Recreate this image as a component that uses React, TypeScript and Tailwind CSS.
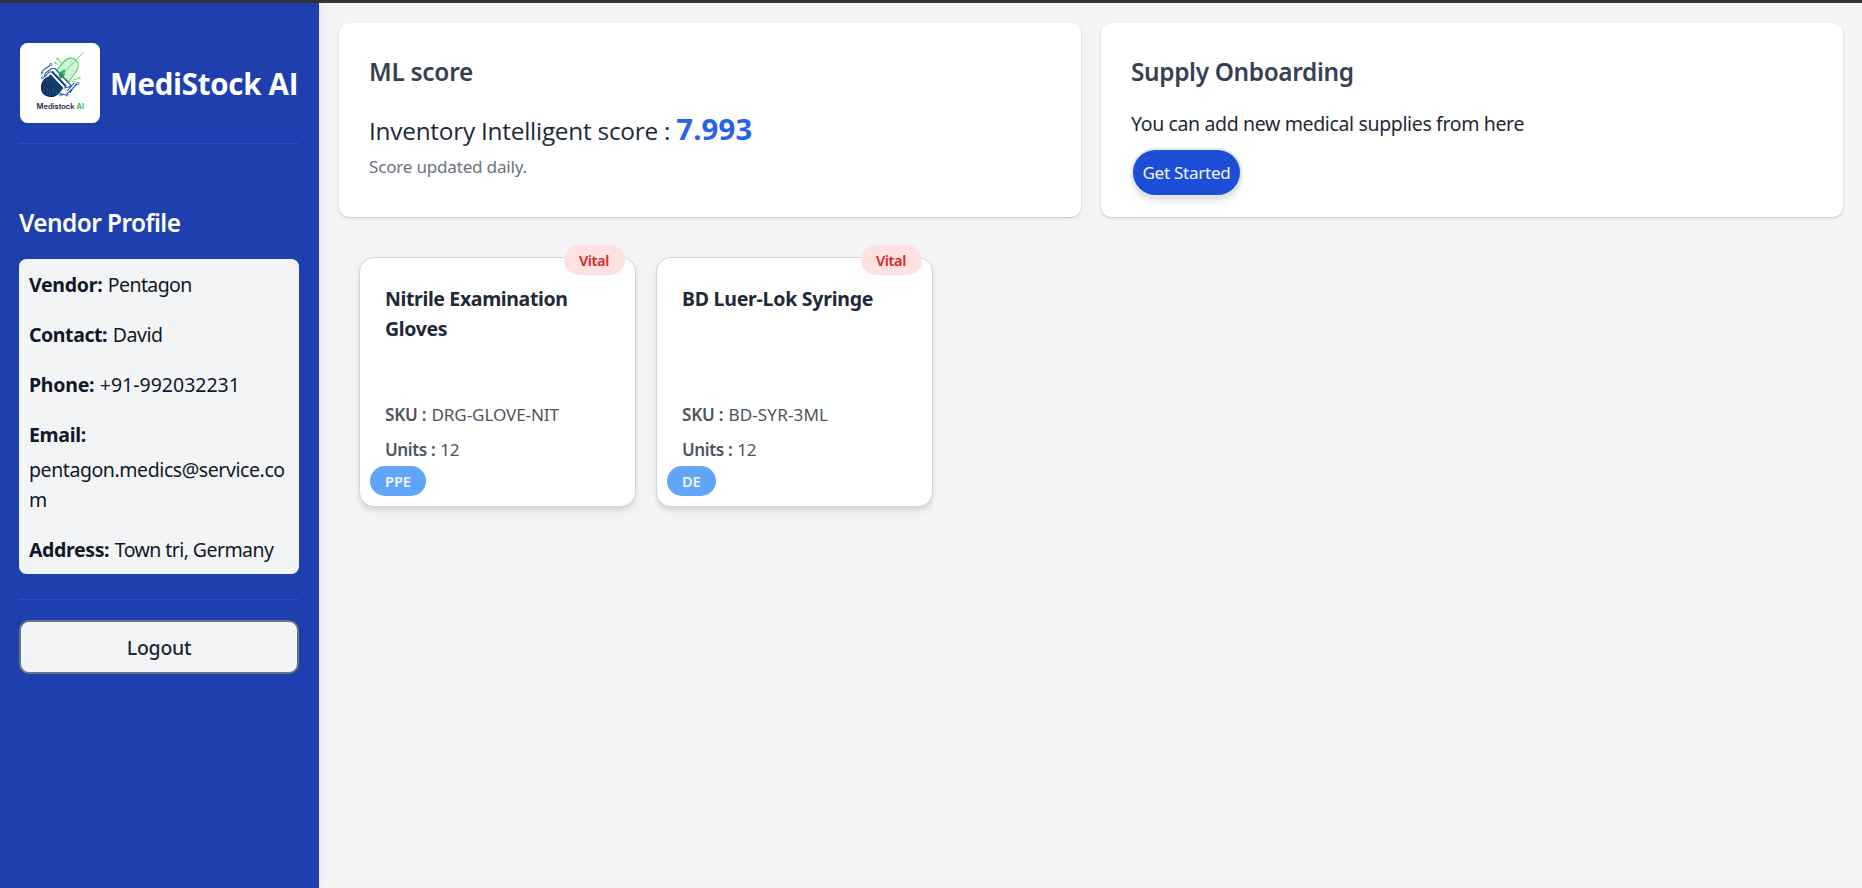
import type { ReactNode } from "react";

type Supply = {
  name: string;
  nameClass: string;
  sku: string;
  skuClass: string;
  units: number;
  tag: string;
};

const supplies: Supply[] = [
  {
    name: "Nitrile Examination Gloves",
    nameClass: "tracking-[-0.36px]",
    sku: "DRG-GLOVE-NIT",
    skuClass: "tracking-[-0.1px]",
    units: 12,
    tag: "PPE",
  },
  {
    name: "BD Luer-Lok Syringe",
    nameClass: "tracking-[-0.24px]",
    sku: "BD-SYR-3ML",
    skuClass: "tracking-[0.12px]",
    units: 12,
    tag: "DE",
  },
];

function Logo() {
  return (
    <svg viewBox="0 0 80 80" className="size-20 shrink-0 rounded-[7.5px] bg-white" aria-label="Medistock AI">
      <defs>
        <linearGradient id="navy" x1="0" y1="1" x2="1" y2="0">
          <stop offset="0" stopColor="#0b2545" />
          <stop offset="1" stopColor="#17508a" />
        </linearGradient>
      </defs>
      {/* green half of the capsule */}
      <path
        d="M36.500 27.500l7.500-9c4-4.500 9.500-4 12.300-.8s2.300 8-.8 11.800L48.500 39z"
        fill="#d5f5da"
        stroke="#49d365"
        strokeWidth="1.200"
      />
      <path
        d="M41 25l4 2M44 21l6 4M47 18l6 5M46 33l5-7M50 33l4-7M44 24l-1 5M52 17l-3 7M51 29l5-2"
        stroke="#9fe3ac"
        strokeWidth="0.600"
        fill="none"
      />
      <path d="M39 34c-1-3 .5-5.500 6-7.500.5 3 0 6.500-2.500 8.500-1.500 1-3 .5-3.500-1z" fill="#22b845" />
      <path d="M43 31L63.500 9.200" stroke="#5bdc72" strokeWidth="1" />
      <g fill="none" stroke="#58d970" strokeWidth="0.900">
        <path d="M37.500 22l-2-2M41 20l-1-2-2-1.500M53 36l3 .5 2.500-1.200M51 38l3 1" />
        <circle cx="37.500" cy="15.800" r="1" />
        <circle cx="35" cy="19.800" r="0.800" />
        <circle cx="59.500" cy="35" r="0.800" />
        <circle cx="55" cy="39.500" r="0.800" />
      </g>
      {/* circuit traces */}
      <g fill="none" stroke="#2e5ca6" strokeWidth="1.100">
        <path d="M22 29l2-2.500 6-4M24 34l1.500-4 6-4.500M31 25.500h4l17 18M25 34l4-5h3" />
        <path d="M44 45l4-1 4-1M42 51l4 1 11-11M47 48l7-8M53 45l-3 5M40 50l3 2" />
      </g>
      <g fill="#fff" stroke="#2e5ca6" strokeWidth="0.900">
        <circle cx="30.800" cy="21.500" r="1.100" />
        <circle cx="22" cy="30" r="0.900" />
        <circle cx="22.500" cy="34.800" r="0.900" />
        <circle cx="57.800" cy="40.500" r="1.100" />
        <circle cx="47" cy="52" r="1" />
        <circle cx="40.500" cy="52" r="0.900" />
      </g>
      {/* navy half of the capsule */}
      <path
        d="M28.500 33.500l2-2.500L43.500 45l-4.500 5.500c-4 4.500-10 4.500-14.500 1.500s-4.500-10-1.500-14.500c1.500-2 3.500-3.500 5.500-4z"
        fill="url(#navy)"
      />
      <path d="M32 28.500L46 43.500" stroke="#17407c" strokeWidth="2" />
      <path d="M31 30.500L44 44.500" stroke="#fff" strokeWidth="1.100" />
      <path d="M24 50v-6M27 52v-7M30 53v-6M33 52v-7M36 51v-4" stroke="#4474ad" strokeWidth="0.500" />
      <text
        x="16.500"
        y="65.600"
        textLength="47.500"
        lengthAdjust="spacingAndGlyphs"
        className="font-['Inter',sans-serif] text-[7.2px] font-semibold"
        fill="#1b1b4b"
      >
        Medistock <tspan fill="#2fb344">AI</tspan>
      </text>
    </svg>
  );
}

function ProfileRow({ label, labelClass, children }: { label: string; labelClass: string; children?: ReactNode }) {
  return (
    <p className="whitespace-nowrap">
      <span className={`mr-[5.5px] font-bold ${labelClass}`}>{label}</span>
      {children}
    </p>
  );
}

function Sidebar() {
  return (
    <aside className="z-10 w-[319px] shrink-0 bg-[#1e40af] pr-5 pl-[19px] text-white shadow-[0_0_8px_rgba(0,0,0,0.08)]">
      <div className="flex items-center gap-[10px] border-b border-[#1d4ed8] pt-10 pb-5 pl-px">
        <Logo />
        <h1 className="pt-[2px] font-['Open_Sans',sans-serif] text-[29.5px] leading-[40px] font-bold tracking-[-0.28px] whitespace-nowrap">
          MediStock AI
        </h1>
      </div>

      <h2 className="mt-[61px] text-[24.4px] leading-[36px] font-semibold tracking-[-0.56px]">Vendor Profile</h2>

      <div className="mt-[18px] flex flex-col gap-5 rounded-[7.5px] bg-[#f3f4f6] px-2.5 pt-[11px] pb-[9px] text-[19.5px] leading-[30px] text-[#111827]">
        <ProfileRow label="Vendor:" labelClass="tracking-[-0.28px]">
          <span className="tracking-[-0.6px]">Pentagon</span>
        </ProfileRow>
        <ProfileRow label="Contact:" labelClass="tracking-[-0.42px]">
          <span className="tracking-[-0.45px]">David</span>
        </ProfileRow>
        <ProfileRow label="Phone:" labelClass="tracking-[-0.25px]">
          <span className="tracking-[0px]">+91-992032231</span>
        </ProfileRow>
        <div className="flex flex-col gap-[5px]">
          <ProfileRow label="Email:" labelClass="tracking-[-0.3px]" />
          <p className="tracking-[-0.42px] break-all">pentagon.medics@service.com</p>
        </div>
        <ProfileRow label="Address:" labelClass="tracking-[-0.37px]">
          <span className="tracking-[-0.56px]">Town tri, Germany</span>
        </ProfileRow>
      </div>

      <div className="mt-[25px] border-t border-[#1d4ed8] pt-5">
        <button className="flex h-[54px] w-full items-center justify-center rounded-[10px] border-2 border-[#6b7280] bg-[#f3f4f6] pt-[2px] text-[19.5px] font-medium tracking-[-0.28px] text-[#1f2937]">
          Logout
        </button>
      </div>
    </aside>
  );
}

function Panel({ title, titleClass, children }: { title: string; titleClass: string; children: ReactNode }) {
  return (
    <section className="h-[194px] flex-1 rounded-[10px] bg-white px-[30px] pt-[30px] shadow-[0_1px_3px_rgba(0,0,0,0.1),0_1px_2px_rgba(0,0,0,0.1)]">
      <h3 className={`text-[24.4px] leading-[38px] font-semibold text-[#374151] ${titleClass}`}>{title}</h3>
      {children}
    </section>
  );
}

function SupplyCard({ item }: { item: Supply }) {
  return (
    <article className="relative h-[250px] w-[277px] rounded-[15px] border border-[#d1d5db] bg-white pt-[26px] pr-5 pl-[25px] shadow-[0_5px_7px_-1px_rgba(0,0,0,0.1),0_2px_5px_-2px_rgba(0,0,0,0.1)]">
      <span className="absolute -top-[13px] right-[10px] flex h-[30px] w-[61px] items-center justify-center rounded-full bg-[#fee2e2] pt-px pr-px text-[14.6px] font-semibold tracking-[-0.35px] text-[#dc2626]">
        Vital
      </span>
      <h4 className={`h-[104px] text-[19.5px] leading-[30px] font-bold text-[#1f2937] ${item.nameClass}`}>{item.name}</h4>
      <p className="mt-[14px] text-[17.1px] leading-[25px] text-[#4b5563]">
        <span className="mr-[5px] font-semibold tracking-[-0.2px]">SKU :</span>
        <span className={item.skuClass}>{item.sku}</span>
      </p>
      <p className="mt-[10px] text-[17.1px] leading-[25px] text-[#4b5563]">
        <span className="mr-[5px] font-semibold tracking-[-0.4px]">Units :</span>
        <span className="tracking-[-0.3px]">{item.units}</span>
      </p>
      <span className="absolute bottom-[10px] left-[10px] flex h-[30px] items-center rounded-full bg-[#60a5fa] px-[15px] pt-px text-[14.6px] font-semibold tracking-[-0.1px] text-[#f3f4f6]">
        {item.tag}
      </span>
    </article>
  );
}

export default function App() {
  return (
    <div className="flex h-[888px] w-full flex-col overflow-hidden bg-[#f3f4f6] font-['Noto_Sans',sans-serif] text-[#1f2937]">
      <div className="h-[3px] shrink-0 bg-[#353535]" />
      <div className="flex min-h-0 flex-1">
        <Sidebar />
        <main className="flex-1 pt-5 pr-[19px] pl-5">
          <div className="flex gap-5">
            <Panel title="ML score" titleClass="tracking-[-0.25px]">
              <p className="mt-[18px] flex items-baseline gap-[6px] leading-[40px]">
                <span className="font-['Open_Sans',sans-serif] text-[24.4px] tracking-[-0.25px]">
                  Inventory Intelligent score :
                </span>
                <span className="text-[29.3px] font-bold tracking-[0.2px] text-[#2563eb]">7.993</span>
              </p>
              <p className="mt-[3px] text-[17.1px] leading-[25px] tracking-[-0.22px] text-[#6b7280]">Score updated daily.</p>
            </Panel>
            <Panel title="Supply Onboarding" titleClass="tracking-[-0.35px]">
              <p className="mt-[18px] text-[19.5px] leading-[30px] tracking-[-0.36px]">
                You can add new medical supplies from here
              </p>
              <button className="mt-[9px] flex h-[49px] w-[111px] items-center justify-center rounded-full border-2 border-[#e5e7eb] bg-[#1d4ed8] pt-px text-[17.1px] tracking-[-0.28px] whitespace-nowrap text-[#f3f4f6] shadow-[0_5px_7px_-1px_rgba(0,0,0,0.1),0_2px_5px_-2px_rgba(0,0,0,0.1)]">
                Get Started
              </button>
            </Panel>
          </div>

          <div className="mt-10 flex gap-5 pl-5">
            {supplies.map((item) => (
              <SupplyCard key={item.sku} item={item} />
            ))}
          </div>
        </main>
      </div>
    </div>
  );
}
